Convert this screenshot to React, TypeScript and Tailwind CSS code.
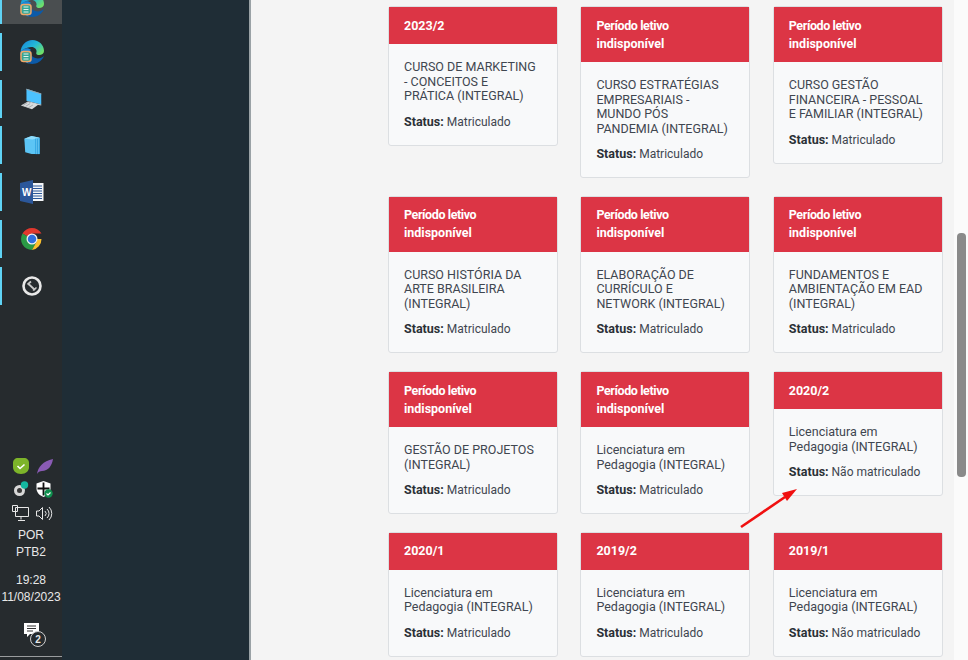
import React from 'react'

type Course = { period: string[]; title: string[]; status: string }

const NA = ['Período letivo', 'indisponível']
const PED = ['Licenciatura em', 'Pedagogia (INTEGRAL)']

const rows: Course[][] = [
  [
    { period: ['2023/2'], title: ['CURSO DE MARKETING', '- CONCEITOS E', 'PRÁTICA (INTEGRAL)'], status: 'Matriculado' },
    { period: NA, title: ['CURSO ESTRATÉGIAS', 'EMPRESARIAIS -', 'MUNDO PÓS', 'PANDEMIA (INTEGRAL)'], status: 'Matriculado' },
    { period: NA, title: ['CURSO GESTÃO', 'FINANCEIRA - PESSOAL', 'E FAMILIAR (INTEGRAL)'], status: 'Matriculado' },
  ],
  [
    { period: NA, title: ['CURSO HISTÓRIA DA', 'ARTE BRASILEIRA', '(INTEGRAL)'], status: 'Matriculado' },
    { period: NA, title: ['ELABORAÇÃO DE', 'CURRÍCULO E', 'NETWORK (INTEGRAL)'], status: 'Matriculado' },
    { period: NA, title: ['FUNDAMENTOS E', 'AMBIENTAÇÃO EM EAD', '(INTEGRAL)'], status: 'Matriculado' },
  ],
  [
    { period: NA, title: ['GESTÃO DE PROJETOS', '(INTEGRAL)'], status: 'Matriculado' },
    { period: NA, title: PED, status: 'Matriculado' },
    { period: ['2020/2'], title: PED, status: 'Não matriculado' },
  ],
  [
    { period: ['2020/1'], title: PED, status: 'Matriculado' },
    { period: ['2019/2'], title: PED, status: 'Matriculado' },
    { period: ['2019/1'], title: PED, status: 'Não matriculado' },
  ],
]

function CourseCard({ course }: { course: Course }) {
  return (
    <div className="w-[170px] self-start rounded-[3px] border border-[#dcdfe2] bg-[#f8f9fa]">
      <div className="bg-[#dc3545] px-[15px] py-[9.500px] text-[12.5px] font-bold leading-[18px] text-white">
        {course.period.map((l) => (
          <div key={l} className={l === 'Período letivo' ? 'tracking-[-0.4px]' : ''}>
            {l}
          </div>
        ))}
      </div>
      <div className="whitespace-nowrap px-[15px] pb-[14px] pt-[16px] text-[12.5px] text-[#3f4650]">
        <div className="leading-[14.5px]">
          {course.title.map((l) => (
            <div key={l}>{l}</div>
          ))}
        </div>
        <div className="mt-[9px] text-[12px] leading-[18px]">
          <b className="text-[12.5px] text-[#2b3036]">Status:</b> {course.status}
        </div>
      </div>
    </div>
  )
}

function Edge() {
  return (
    <svg width="24" height="24" viewBox="0 0 24 24">
      <defs>
        <linearGradient id="e1" x1="0" y1="0" x2="1" y2=".7">
          <stop offset="0" stopColor="#1780d8" />
          <stop offset=".55" stopColor="#22b8d8" />
          <stop offset="1" stopColor="#6ee06a" />
        </linearGradient>
      </defs>
      <path d="M.5 12C1 5 6 0 12.500 0 19 0 24 5 24 11c0 3-3 4.500-6 4-2-.5-2-2-1.500-3 .5-3-2.500-5.500-5.500-5C7 7.500 3 9 .5 12z" fill="url(#e1)" />
      <path d="M9 23.500c5 1.500 12-.5 15-7.500-3 3-8 3-11 1-2-1.500-2.500-4-1.500-6C8 13 6 18 9 23.500z" fill="#0c5aa8" />
      <path d="M.5 12c-.5 5 3 10.500 8.500 11.500-4-3.500-4-9.500 2-13.500-3-3-8-2-10.500 2z" fill="#1a86d8" />
      <rect x="1" y="11.500" width="10" height="10" rx="2.500" fill="#35a594" stroke="#eea86a" strokeWidth="1.500" />
      <path d="M3.500 14h5M3.500 16.500h5M3.500 19h5" stroke="#dff5ee" strokeWidth="1" />
    </svg>
  )
}

function Computer() {
  return (
    <svg width="24" height="24" viewBox="0 0 26 26">
      <path d="M7 2l16 5v12L7 15z" fill="#4cc2ff" />
      <path d="M7 2l16 5v1L7 3z" fill="#9aa3a8" />
      <path d="M7 15l16 4v1l-6-1-4-1z" fill="#c7ced2" />
      <path d="M1 20l7-4 12 3-7 5z" fill="#d9dcde" />
      <path d="M3 20l5-3M6 21l5-3M9 22.500l5-3" stroke="#8b9094" strokeWidth=".7" />
    </svg>
  )
}

function Cube() {
  return (
    <svg width="17" height="20" viewBox="0 0 18 22">
      <path d="M0 4l8-3 9 2v18H8l-7-2z" fill="#5cc5f5" />
      <path d="M0 4l8-3 9 2-8 2z" fill="#8fdcfb" />
      <path d="M12 4h5v17h-5z" fill="#2fa3e0" />
      <path d="M13.500 4v17M15.500 4v17" stroke="#8fdcfb" strokeWidth=".6" />
    </svg>
  )
}

function Word() {
  return (
    <svg width="24" height="24" viewBox="0 0 24 24">
      <rect x="10" y="3" width="13.500" height="18" fill="#f4f6f8" />
      <path d="M13 6h9M13 8.500h9M13 11h9M13 13.500h9M13 16h9M13 18.500h9" stroke="#2b579a" strokeWidth="1" />
      <path d="M0 3l13-3v24L0 21z" fill="#2b579a" />
      <text x="2" y="15.500" fontSize="10" fontWeight="700" fill="#fff" fontFamily="Liberation Sans, sans-serif">W</text>
    </svg>
  )
}

function Chrome() {
  return (
    <svg width="24" height="24" viewBox="0 0 48 48">
      <path d="M24 24L5 13A22 22 0 0 1 43 13H24z" fill="#e0382e" />
      <path d="M24 24L5 13A22 22 0 0 0 24 46l10-18z" fill="#2a9a46" />
      <path d="M24 24h19a22 22 0 0 1-19 22l10-18z" fill="#fbc02d" />
      <circle cx="24" cy="24" r="11" fill="#f2f2f2" />
      <circle cx="24" cy="24" r="8.500" fill="#2f6fe0" />
    </svg>
  )
}

function Sync() {
  return (
    <svg width="22" height="22" viewBox="0 0 22 22" fill="none" stroke="#e8e8e8" strokeWidth="2.600">
      <circle cx="11" cy="11" r="8.500" />
      <path d="M6.500 9.500L10 6.500M7 8.500L14 15" strokeWidth="1.800" stroke="#c8c8c8" />
      <path d="M12 15.500L15.500 12.500" strokeWidth="1.600" stroke="#c8c8c8" />
    </svg>
  )
}

function Tray() {
  return (
    <div className="ml-[3px] grid w-[40px] grid-cols-2 justify-items-center gap-x-[8px] gap-y-[7px]">
      <svg width="16" height="16" viewBox="0 0 16 16">
        <path d="M5 0h6c3 0 5 2 5 5v4c0 4-3 7-8 7-5 0-8-3-8-7V5c0-3 2-5 5-5z" fill="#7db42a" />
        <path d="M4.500 8l2.500 2.500 4.500-4" stroke="#fff" strokeWidth="1.600" fill="none" />
      </svg>
      <svg width="16" height="16" viewBox="0 0 16 16">
        <path d="M0 16c1-7 6-13 16-15-1 7-5 12-11 12-2 0-4 1-5 3z" fill="#8a5bb5" />
      </svg>
      <svg width="16" height="16" viewBox="0 0 16 16">
        <circle cx="6.500" cy="9.500" r="5.500" fill="#d8d8d8" />
        <circle cx="6.500" cy="9.500" r="2.500" fill="#3a3a3a" />
        <circle cx="11.500" cy="4" r="3.700" fill="#14b8a0" />
      </svg>
      <svg width="17" height="17" viewBox="0 0 17 17">
        <path d="M7.500 0l7 2.500v5c0 4-3 7-7 8.500-4-1.500-7-4.500-7-8.500v-5z" fill="#fff" />
        <path d="M7.500 1.500v13M1.500 7.500h12" stroke="#111" strokeWidth="1.800" />
        <circle cx="12.500" cy="12.500" r="4.200" fill="#0f8f4e" />
        <path d="M10.500 12.500l1.500 1.500 2.500-2.500" stroke="#fff" strokeWidth="1.100" fill="none" />
      </svg>
      <svg width="17" height="17" viewBox="0 0 17 17" fill="none" stroke="#e6e6e6" strokeWidth="1">
        <path d="M3.500 2.500h13v9h-13zM.5.500h5v6h-5zM9 11.500v3M6 15.500h7" />
      </svg>
      <svg width="17" height="17" viewBox="0 0 17 17" fill="none" stroke="#e6e6e6" strokeWidth="1">
        <path d="M.5 6h2.500L6.500 2.500v12L3 11H.5zM9 6a3.500 3.500 0 0 1 0 5M11 4a6 6 0 0 1 0 9M13 2a9 9 0 0 1 0 13" />
      </svg>
    </div>
  )
}

export default function App() {
  const strip = 'flex h-[38px] items-center justify-center border-l-2 border-[#5fd3f5]'

  return (
    <div className="flex h-[660px] w-[968px] overflow-hidden bg-[#f4f4f4] font-['Roboto',sans-serif]">
      {/* barra de tarefas */}
      <div className="flex w-[62px] shrink-0 flex-col justify-between bg-[#262b2e] text-[#e8e8e8]">
        <div className="-mt-[14px] flex flex-col gap-[8.75px]">
          <div className={strip + ' bg-[#4a4e50]'}>
            <Edge />
          </div>
          <div className={strip}>
            <Edge />
          </div>
          <div className={strip}>
            <Computer />
          </div>
          <div className={strip}>
            <Cube />
          </div>
          <div className={strip}>
            <Word />
          </div>
          <div className={strip}>
            <Chrome />
          </div>
          <div className={strip}>
            <Sync />
          </div>
        </div>
        <div className="flex flex-col items-center font-['Liberation_Sans',sans-serif] text-[12px]">
          <Tray />
          <div className="mt-[5px] text-center leading-[17px]">
            POR
            <br />
            PTB2
          </div>
          <div className="mt-[11px] whitespace-nowrap text-center leading-[17px]">
            19:28
            <br />
            11/08/2023
          </div>
          <div className="relative mt-[17px] mb-[3px] flex h-[34px] w-full justify-center border-b border-[#9a9c9e]">
            <svg width="15" height="14" viewBox="0 0 15 14">
              <path d="M0 0h15v11H6l-3 3v-3H0z" fill="#fff" />
              <path d="M3 3h9M3 5.500h9M3 8h6" stroke="#333" strokeWidth="1" />
            </svg>
            <span className="absolute left-[30px] top-[8px] flex h-[16px] w-[16px] items-center justify-center rounded-full border border-[#cfcfcf] bg-[#262b2e] text-[10px] font-bold">
              2
            </span>
          </div>
        </div>
      </div>

      {/* menu lateral */}
      <div className="w-[189px] shrink-0 border-r-2 border-[#9aa2a6] bg-[#1f2d36]" />

      {/* conteudo */}
      <div className="relative flex-1 pl-[137px] pt-[6px]">
        {rows.map((row, i) => (
          <div key={i} className="mb-[17.800px] flex gap-[22.400px]">
            {row.map((c, j) => (
              <CourseCard key={j} course={c} />
            ))}
          </div>
        ))}
        <svg className="absolute left-[488px] top-[486px]" width="62" height="44" viewBox="0 0 62 44">
          <path d="M2 41L46 11" stroke="#f01010" strokeWidth="2.600" />
          <path d="M58 3L43 7l5 8z" fill="#f01010" />
        </svg>
      </div>

      {/* barra de rolagem */}
      <div className="w-[14px] shrink-0 bg-[#fbfbfb] pl-[3px] pt-[233px]">
        <div className="h-[244px] w-[9px] rounded-[4px] bg-[#8a8a8a]" />
      </div>
    </div>
  )
}
